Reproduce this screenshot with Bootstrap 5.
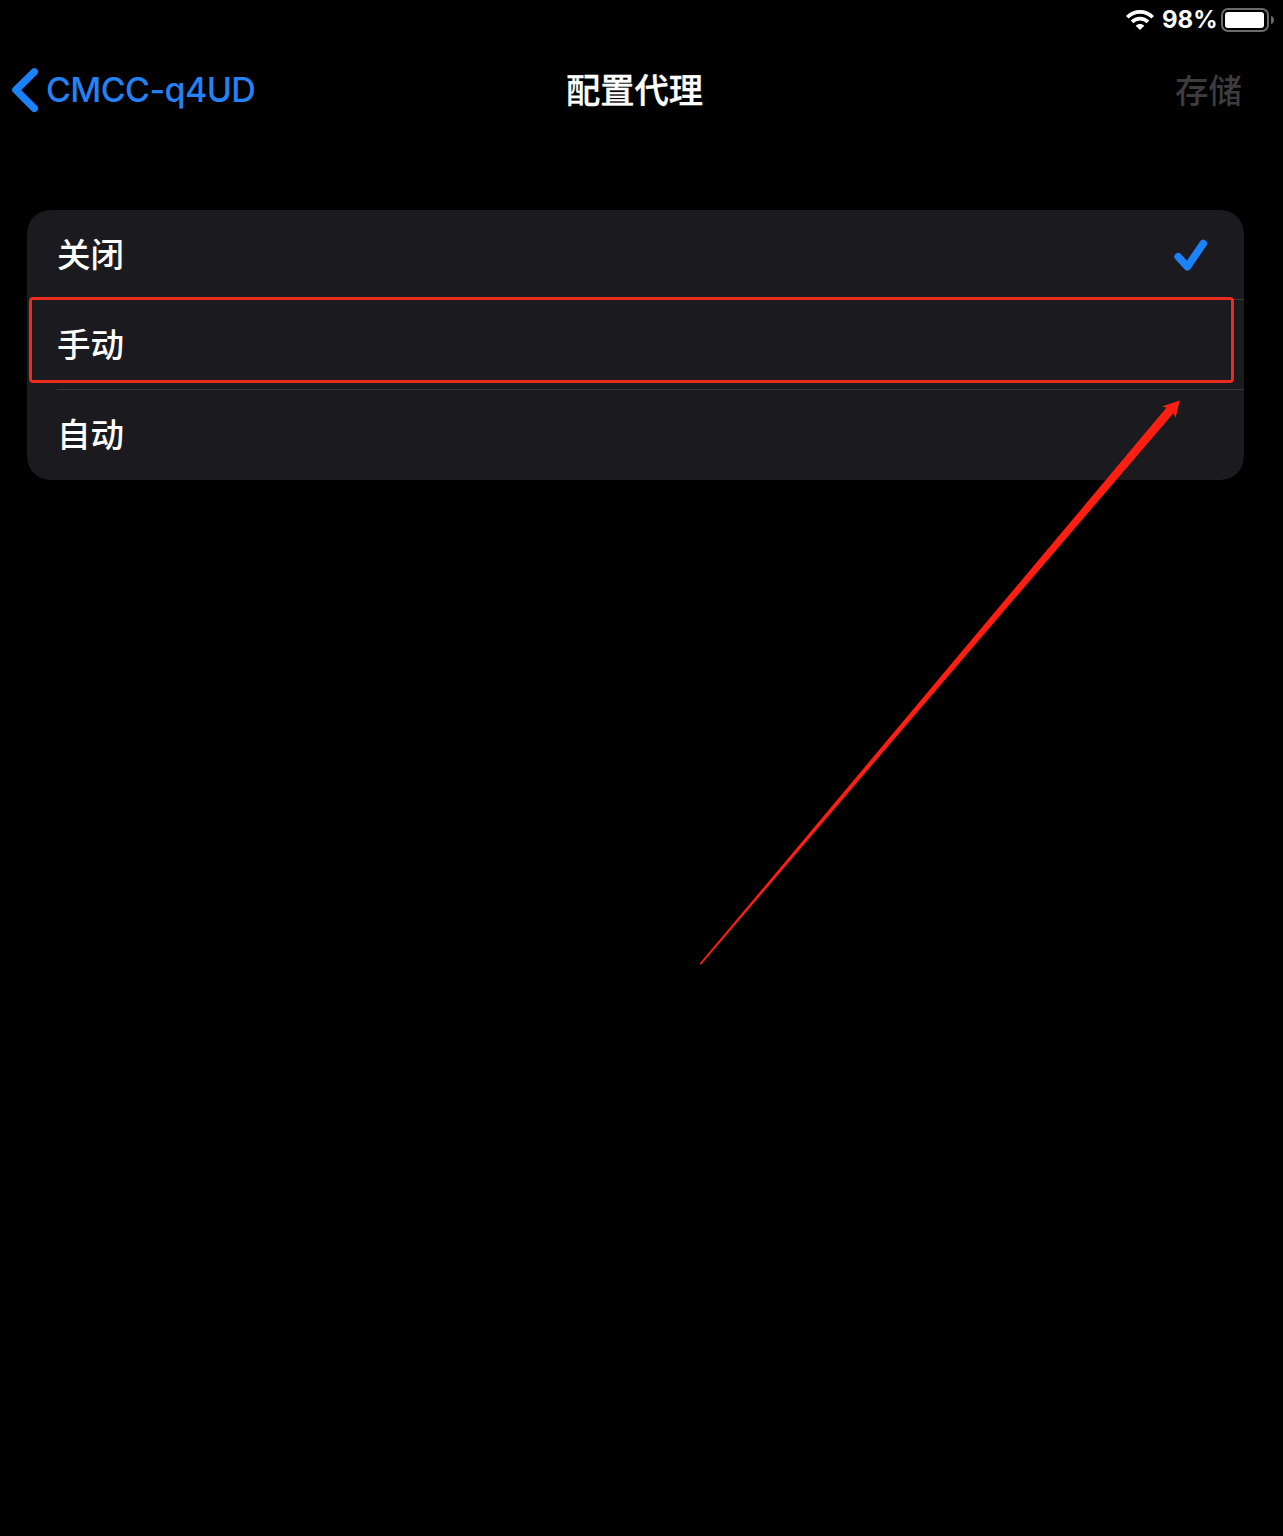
<!DOCTYPE html>
<html lang="zh-CN" data-bs-theme="dark">
<head>
<meta charset="utf-8">
<meta name="viewport" content="width=device-width, initial-scale=1">
<title>配置代理</title>
<link href="https://cdn.jsdelivr.net/npm/bootstrap@5.3.0/dist/css/bootstrap.min.css" rel="stylesheet">
<style>
  body { background: #000; color: #fff; min-height: 1536px; font-family: Inter, "Noto Sans CJK SC", sans-serif; overflow: hidden; }
  svg { display: block; flex: none; }
  .status-bar { height: 40px; padding-right: 9px; font-size: 24px; font-weight: 650; line-height: 40px; }
  .battery-level { width: 54px; margin: 0 5px 0 8px; white-space: nowrap; }
  .title-bar { height: 100px; padding: 2px 41px 0 11px; font-size: 34px; line-height: 50px; display: grid; grid-template-columns: 1fr auto 1fr; }
  .back-link { color: #2482f5; font-weight: 500; gap: 7px; white-space: nowrap; letter-spacing: -.6px; margin: -2px 0 0; }
  .page-title { font-weight: 500; font-size: 34.3px; margin-left: 8px; margin-right: -8px; padding-bottom: 1px; -webkit-text-stroke: .3px #fff; }
  .save-button { color: #3c3c3e; font-weight: 500; font-size: 33.5px; padding-bottom: 1px; }
  .settings { margin: 70px 39px 0 27px; }
  .option-list { --bs-list-group-bg: #1b1b1f; --bs-list-group-color: #fff; border-radius: 23px; overflow: hidden; }
  .option-list .list-group-item { border: 0; height: 90px; padding: 0 0 0 30px; }
  .option-body { height: 90px; font-size: 33.5px; font-weight: 500; padding: 1px 36px 0 0; border-bottom: 1px solid #39393b; }
  .list-group-item:last-child .option-body { border-bottom: 0; }
  .check-mark { margin-top: -1px; }
  .highlight-box { left: 2px; right: 10px; top: 87px; height: 86px; border: 3px solid #eb2a20; border-radius: 4px; z-index: 3; }
  .pointer-arrow { left: 690px; top: 390px; z-index: 4; }
</style>
<script src="https://cdn.jsdelivr.net/npm/bootstrap@5.3.0/dist/js/bootstrap.bundle.min.js" defer></script>
</head>
<body class="position-relative">
<header>
  <div class="status-bar d-flex align-items-center justify-content-end">
    <svg width="28" height="20" viewBox="0 0 28 20" fill="none" stroke="#fff" aria-label="Wi-Fi">
      <path d="M1.3 7.2C8.4.2 19.6.2 26.7 7.2" stroke-width="3.7"/>
      <path d="M6 11.9c4.5-4.4 11.5-4.4 16 0" stroke-width="3.6"/>
      <path d="M14 20l-4.3-4.2c2.4-2.3 6.2-2.3 8.6 0z" fill="#fff" stroke="none"/>
    </svg>
    <span class="battery-level">98%</span>
    <svg width="53" height="24" viewBox="0 0 53 24" aria-label="电池">
      <rect x="1" y="1" width="46" height="22" rx="6" fill="none" stroke="#6b6b6b" stroke-width="2"/>
      <rect x="4" y="4" width="39" height="16" rx="3" fill="#fff"/>
      <path d="M50 8c4 1 4 7 0 8z" fill="#6b6b6b"/>
    </svg>
  </div>
  <nav class="title-bar align-items-center">
    <a href="#" class="back-link d-flex align-items-center text-decoration-none">
      <svg width="28" height="46" viewBox="0 0 28 46" fill="none" stroke="#1a82fb" stroke-width="7.4" stroke-linecap="round" stroke-linejoin="round"><path d="M23.3 4.8L4.9 23l18.4 18.3"/></svg>
      <span>CMCC-q4UD</span>
    </a>
    <span class="page-title">配置代理</span>
    <span class="save-button text-end">存储</span>
  </nav>
</header>
<main class="settings position-relative">
  <ul class="option-list list-group">
    <li class="list-group-item">
      <div class="option-body d-flex align-items-center justify-content-between">
        <span>关闭</span>
        <svg class="check-mark" width="34" height="34" viewBox="0 0 34 34" fill="none" stroke="#1a82fb" stroke-width="7.6" stroke-linecap="round" stroke-linejoin="round"><path d="M4.2 18.7l9.1 10.1L29.2 5.6"/></svg>
      </div>
    </li>
    <li class="list-group-item"><div class="option-body d-flex align-items-center">手动</div></li>
    <li class="list-group-item"><div class="option-body d-flex align-items-center">自动</div></li>
  </ul>
  <div class="highlight-box position-absolute"></div>
</main>
<svg class="pointer-arrow position-absolute" width="500" height="584" viewBox="0 0 500 584"><path d="M9.7 573.6L476.6 17.6 472 16.4 489.7 10.5 485.6 27.8 483.4 23.2 10.9 574.7z" fill="#ff1f12"/></svg>
</body>
</html>
